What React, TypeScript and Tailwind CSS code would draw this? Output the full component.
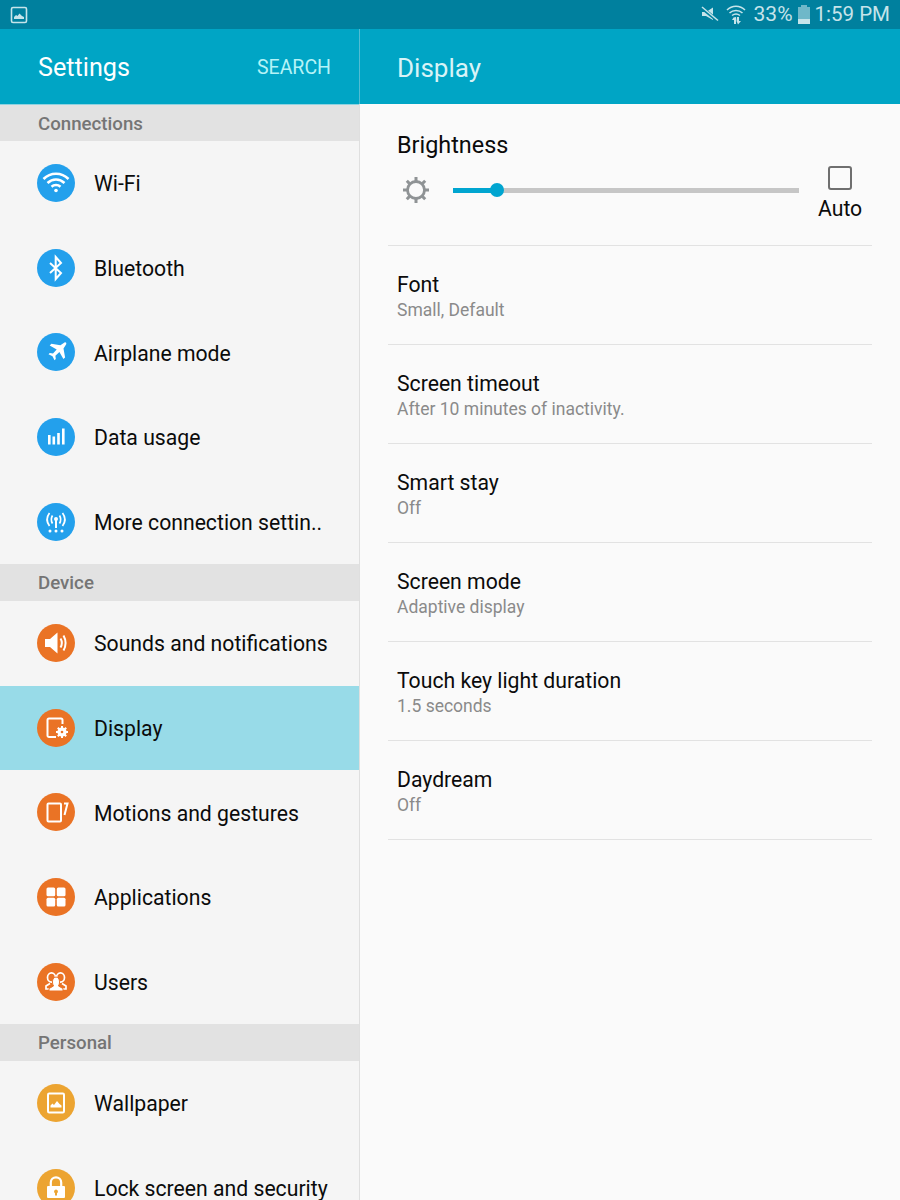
const font = { fontFamily: "Roboto, sans-serif" }

function Circle({ color, children }: { color: string; children: React.ReactNode }) {
  return (
    <div className={`w-[38px] h-[38px] rounded-full flex items-center justify-center shrink-0 ${color}`}>
      <svg viewBox="0 0 38 38" className="w-[38px] h-[38px]" fill="white">
        {children}
      </svg>
    </div>
  )
}

const blue = "bg-[#23a0ec]"
const orange = "bg-[#ea7325]"
const yellow = "bg-[#eca431]"

const icons = {
  wifi: (
    <g fill="none" stroke="white" strokeWidth="2.6">
      <path d="M6.5 15 C13.5 8 24.5 8 31.5 15" />
      <path d="M10.5 19 C15.5 14.3 22.5 14.3 27.5 19" />
      <path d="M14.5 22.7 C17 20.5 21 20.5 23.5 22.7" />
      <circle cx="19" cy="26.5" r="1.8" fill="white" stroke="none" />
    </g>
  ),
  bluetooth: <path d="M13 14 L24 24 L18.7 30 V8 L24 14 L13 24" fill="none" stroke="white" strokeWidth="2" />,
  plane: (
    <path d="M27.5 9.5 c1.3-.5 2.2.4 1.7 1.7 l-2.7 4.2 l1.6 9 l-1.7 1.7 l-4-7 l-4 3.7 l.4 3.2 l-1.3 1.3 l-2-4 l-4-2 l1.3-1.3 l3.2.4 l3.7-4 l-7-4 l1.7-1.7 l9 1.6 z" />
  ),
  data: (
    <g>
      <rect x="11" y="17" width="2.6" height="9.5" />
      <rect x="15.5" y="18.5" width="2.6" height="8" />
      <rect x="20.2" y="15" width="2.6" height="11.5" />
      <rect x="25" y="10.5" width="2.6" height="16" />
    </g>
  ),
  more: (
    <g>
      <g fill="none" stroke="white" strokeWidth="1.7">
        <path d="M12.5 10 C9.5 14 9.5 19 12.5 23" />
        <path d="M15.5 12.5 C14 15 14 18 15.5 20.5" />
        <path d="M25.5 10 C28.5 14 28.5 19 25.5 23" />
        <path d="M22.5 12.5 C24 15 24 18 22.5 20.5" />
      </g>
      <circle cx="19" cy="16" r="2" />
      <rect x="18" y="17" width="2" height="8" />
      <circle cx="13" cy="28" r="1.5" />
      <circle cx="19" cy="28" r="1.5" />
      <circle cx="25" cy="28" r="1.5" />
    </g>
  ),
  sound: (
    <g>
      <path d="M8 15 H13 L20.5 8.5 V29.5 L13 23 H8 Z" />
      <path d="M23.5 14.5 C25 17 25 21 23.5 23.5" fill="none" stroke="white" strokeWidth="2" />
      <path d="M26.5 11.5 C29 16 29 22 26.5 26.5" fill="none" stroke="white" strokeWidth="2" />
    </g>
  ),
  display: (
    <g>
      <path d="M19 28 H12 a1.5 1.5 0 0 1-1.5-1.5 V11 a1.5 1.5 0 0 1 1.5-1.5 H24 a1.5 1.5 0 0 1 1.5 1.5 V15" fill="none" stroke="white" strokeWidth="2" />
      <circle cx="25" cy="23" r="4.6" />
      <g stroke="white" strokeWidth="2">
        <path d="M25 17 V29" />
        <path d="M19 23 H31" />
        <path d="M20.8 18.8 L29.2 27.2" />
        <path d="M29.2 18.8 L20.8 27.2" />
      </g>
      <circle cx="25" cy="23" r="1.3" fill="#ea7325" />
    </g>
  ),
  motions: (
    <g fill="none" stroke="white" strokeWidth="2">
      <rect x="10.5" y="10.5" width="13.5" height="18" rx="1" />
      <path d="M27 10.5 H30.5 L27.5 22" />
    </g>
  ),
  apps: (
    <g>
      <rect x="9.5" y="9.5" width="8.7" height="8.7" rx="1.5" />
      <rect x="19.8" y="9.5" width="8.7" height="8.7" rx="1.5" />
      <rect x="9.5" y="19.8" width="8.7" height="8.7" rx="1.5" />
      <rect x="19.8" y="19.8" width="8.7" height="8.7" rx="1.5" />
    </g>
  ),
  users: (
    <g>
      <ellipse cx="14.5" cy="14.5" rx="4" ry="4.6" fill="none" stroke="white" strokeWidth="1.7" />
      <ellipse cx="23.5" cy="14.5" rx="4" ry="4.6" fill="none" stroke="white" strokeWidth="1.7" />
      <path d="M13 20.5 L9 23 V26 H29 V23 L25 20.5" fill="none" stroke="white" strokeWidth="1.7" />
      <path d="M12 28 V25.5 L16.5 23 C14.8 20 15 14.5 19 14 C23 14.5 23.2 20 21.5 23 L26 25.5 V28 Z" stroke="#ea7325" strokeWidth="1" />
    </g>
  ),
  wallpaper: (
    <g>
      <rect x="11" y="9.5" width="16" height="19" rx="1.2" fill="none" stroke="white" strokeWidth="2" />
      <path d="M13.5 23.5 V21.5 L15.5 19.5 L17 21 L20 17 L22.5 20 L24.5 21.5 V23.5 Z" />
    </g>
  ),
  lock: (
    <g>
      <path d="M13.8 17 V13.5 a5.2 5.2 0 0 1 10.4 0 V17" fill="none" stroke="white" strokeWidth="2.2" />
      <path fillRule="evenodd" d="M11 17 H27 a1 1 0 0 1 1 1 V28 a1 1 0 0 1-1 1 H11 a1 1 0 0 1-1-1 V18 a1 1 0 0 1 1-1 Z M19 20.5 a2 2 0 0 0-1 3.7 V26.5 H20 V24.2 a2 2 0 0 0-1-3.7 Z" />
    </g>
  ),
}

function SectionHeader({ title, first }: { title: string; first?: boolean }) {
  return (
    <div className={`shrink-0 bg-[#e2e2e2] pl-[38px] flex items-center text-[18.7px] font-medium text-[#757575] ${first ? "h-[36px] pt-[2px]" : "h-[37px] pt-[2px]"}`}>
      {title}
    </div>
  )
}

function NavRow({ label, color, icon, active }: { label: string; color: string; icon: React.ReactNode; active?: boolean }) {
  return (
    <div className={`h-[84.6px] shrink-0 pl-[37px] flex items-center gap-[19px] text-[21.2px] text-[#0b0b0b] ${active ? "bg-[#98dbe8]" : ""}`}>
      <Circle color={color}>{icon}</Circle>
      <span className="pt-[2px]">{label}</span>
    </div>
  )
}

function SettingRow({ title, sub }: { title: string; sub: string }) {
  return (
    <div className="h-[99px] border-b border-[#e2e2e2] pl-[9px] flex flex-col pt-[25px]">
      <div className="text-[21.2px] leading-[27px] text-[#0b0b0b]">{title}</div>
      <div className="text-[17.5px] leading-[24px] text-[#8a8a8a]">{sub}</div>
    </div>
  )
}

export default function App() {
  return (
    <div className="w-[900px] h-[1200px] overflow-hidden flex flex-col bg-[#fafafa]" style={font}>
      {/* status bar */}
      <div className="h-[29px] shrink-0 bg-[#00809e] flex items-center justify-between pl-[10px] pr-[10px] text-[#c6e4ea]">
        <svg width="18" height="18" viewBox="0 0 18 18">
          <rect x="1.5" y="1.5" width="15" height="15" rx="1.5" fill="none" stroke="#c6e4ea" strokeWidth="1.6" />
          <path d="M4 13 V11 L6 9 L7.5 10 L9.5 7.5 L12 10 L14 11 V13 Z" fill="#c6e4ea" />
        </svg>
        <div className="flex items-center text-[21px]">
          <svg width="20" height="20" viewBox="0 0 20 20" className="mr-[6px]" fill="#c6e4ea">
            <path d="M2 7 H6 L13 2.5 V15 L6 11 H2 Z" />
            <path d="M1 2 L18 16" stroke="#00809e" strokeWidth="3.5" />
            <path d="M2 2 L18 15.5" stroke="#c6e4ea" strokeWidth="1.5" />
          </svg>
          <svg width="20" height="22" viewBox="0 0 20 22" className="mr-[8px]">
            <g fill="none" stroke="#c6e4ea" strokeWidth="1.5">
              <path d="M1 6 C6 1 14 1 19 6" />
              <path d="M3.5 9 C7 5.5 13 5.5 16.5 9" />
              <path d="M6 11.5 C8.5 9.5 11.5 9.5 14 11.5" />
            </g>
            <path d="M7.5 13.5 L10 13 V20 H8 V16 H6 Z M11 13 H13 V17 H15 L12 20.5 L10.5 17 Z" fill="#c6e4ea" />
          </svg>
          <span>33%</span>
          <div className="ml-[5px] mr-[5px] flex flex-col items-center">
            <div className="w-[6px] h-[2px] bg-[#6fb8c9]" />
            <div className="w-[12px] h-[17px] bg-[#6fb8c9] flex flex-col justify-end">
              <div className="h-[5px] bg-[#c6e4ea]" />
            </div>
          </div>
          <span className="text-[20.5px]">1:59 PM</span>
        </div>
      </div>

      <div className="flex-1 flex min-h-0">
        {/* left panel */}
        <div className="w-[359px] shrink-0 flex flex-col bg-[#f5f5f5]">
          <div className="h-[76px] shrink-0 bg-[#00a5c5] flex items-center justify-between pl-[38px] pr-[28px] border-b border-[#8fd2e0]">
            <span className="pt-[3px] text-[25.2px] text-white">Settings</span>
            <span className="pt-[2px] text-[19.5px] text-[#b5f3f7]">SEARCH</span>
          </div>
          <SectionHeader title="Connections" first />
          <NavRow label="Wi-Fi" color={blue} icon={icons.wifi} />
          <NavRow label="Bluetooth" color={blue} icon={icons.bluetooth} />
          <NavRow label="Airplane mode" color={blue} icon={icons.plane} />
          <NavRow label="Data usage" color={blue} icon={icons.data} />
          <NavRow label="More connection settin.." color={blue} icon={icons.more} />
          <SectionHeader title="Device" />
          <NavRow label="Sounds and notifications" color={orange} icon={icons.sound} />
          <NavRow label="Display" color={orange} icon={icons.display} active />
          <NavRow label="Motions and gestures" color={orange} icon={icons.motions} />
          <NavRow label="Applications" color={orange} icon={icons.apps} />
          <NavRow label="Users" color={orange} icon={icons.users} />
          <SectionHeader title="Personal" />
          <NavRow label="Wallpaper" color={yellow} icon={icons.wallpaper} />
          <NavRow label="Lock screen and security" color={yellow} icon={icons.lock} />
        </div>

        <div className="w-px shrink-0 bg-[#dfdfdf]" />

        {/* right panel */}
        <div className="flex-1 flex flex-col min-w-0">
          <div className="h-[75px] shrink-0 bg-[#00a5c5] flex items-center pl-[37px] pt-[3px] text-[26px] text-[#d8f3f7] border-l border-[#53bcd2] -ml-px">
            Display
          </div>
          <div className="pl-[28px] pr-[28px]">
            <div className="h-[142px] border-b border-[#e2e2e2] pl-[9px]">
              <div className="pt-[25px] pb-[1px] text-[23.4px] leading-[32px] text-[#0b0b0b]">Brightness</div>
              <div className="flex items-start">
                <svg width="30" height="30" viewBox="0 0 30 30" className="mt-[13px] ml-[4px] shrink-0">
                  <circle cx="15" cy="15" r="8.5" fill="none" stroke="#8f9395" strokeWidth="2.8" />
                  <g stroke="#8f9395" strokeWidth="3">
                    <path d="M15 2 V6" />
                    <path d="M15 24 V28" />
                    <path d="M2 15 H6" />
                    <path d="M24 15 H28" />
                    <path d="M5.8 5.8 L8.6 8.6" />
                    <path d="M21.4 21.4 L24.2 24.2" />
                    <path d="M5.8 24.2 L8.6 21.4" />
                    <path d="M21.4 8.6 L24.2 5.8" />
                  </g>
                </svg>
                <div className="relative ml-[22px] mt-[26px] w-[346px] h-[5px] bg-[#c6c6c6] shrink-0">
                  <div className="h-[5px] w-[44px] bg-[#00a5d0]" />
                  <div className="absolute left-[37px] top-[-5px] w-[14px] h-[14px] rounded-full bg-[#00a5d0]" />
                </div>
                <div className="ml-[19px] flex flex-col items-center mt-[4px]">
                  <div className="w-[24px] h-[24px] rounded-[3px] border-2 border-[#6f6f6f]" />
                  <div className="mt-[5px] text-[21.2px] leading-[28px] text-[#0b0b0b]">Auto</div>
                </div>
              </div>
            </div>
            <SettingRow title="Font" sub="Small, Default" />
            <SettingRow title="Screen timeout" sub="After 10 minutes of inactivity." />
            <SettingRow title="Smart stay" sub="Off" />
            <SettingRow title="Screen mode" sub="Adaptive display" />
            <SettingRow title="Touch key light duration" sub="1.5 seconds" />
            <SettingRow title="Daydream" sub="Off" />
          </div>
        </div>
      </div>
    </div>
  )
}
